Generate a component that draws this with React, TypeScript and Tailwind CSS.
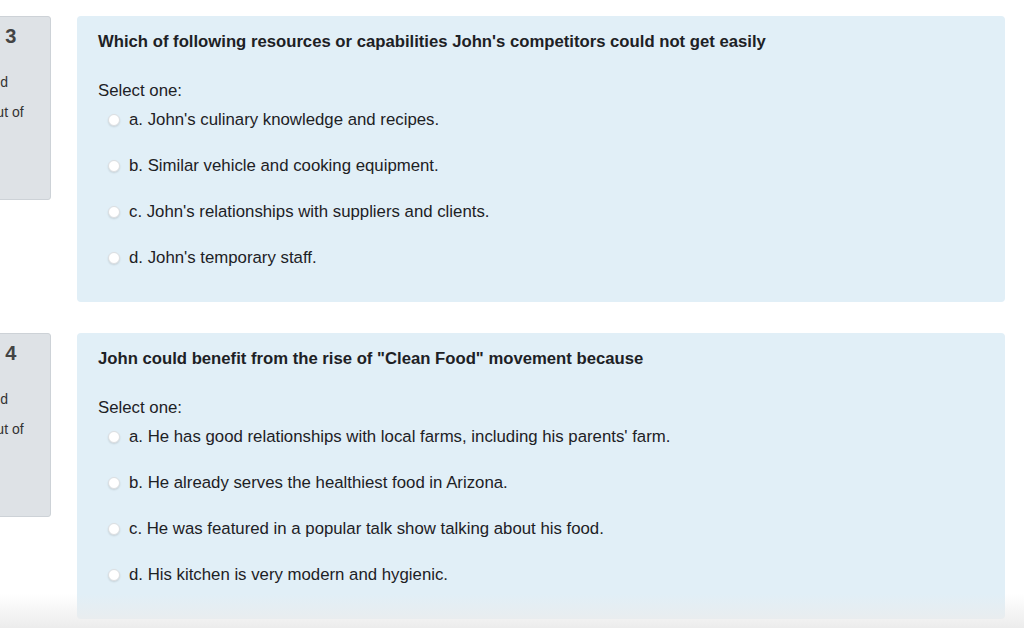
import React from "react";

interface Question {
  no: number;
  text: string;
  options: string[];
}

const questions: Question[] = [
  {
    no: 3,
    text: "Which of following resources or capabilities John's competitors could not get easily",
    options: [
      "a. John's culinary knowledge and recipes.",
      "b. Similar vehicle and cooking equipment.",
      "c. John's relationships with suppliers and clients.",
      "d. John's temporary staff.",
    ],
  },
  {
    no: 4,
    text: 'John could benefit from the rise of "Clean Food" movement because',
    options: [
      "a. He has good relationships with local farms, including his parents' farm.",
      "b. He already serves the healthiest food in Arizona.",
      "c. He was featured in a popular talk show talking about his food.",
      "d. His kitchen is very modern and hygienic.",
    ],
  },
];

function Radio() {
  return (
    <span className="mt-[5px] h-[12px] w-[12px] shrink-0 rounded-full border border-[#dcdfe2] bg-white shadow-[0_1px_2px_rgba(0,0,0,0.12)]" />
  );
}

function QuestionBlock({ q }: { q: Question }) {
  return (
    <div className="flex items-start">
      {/* info box, mostly scrolled off to the left */}
      <div className="ml-[-105px] mr-[26px] h-[184px] w-[156px] shrink-0 rounded-[3px] border border-[#cdd2d7] bg-[#dee2e6] pt-[8px] text-[#333]">
        <div className="whitespace-nowrap pl-[17px] text-[20px] font-bold leading-[22px] text-[#444]">
          Question {q.no}
        </div>
        <div className="ml-[3px] mt-[26px] whitespace-nowrap text-[14px] leading-[18px]">Not yet answered</div>
        <div className="ml-[42px] mt-[12px] whitespace-nowrap text-[14px] leading-[18px]">Marked out of</div>
        <div className="ml-[42px] whitespace-nowrap text-[14px] leading-[18px]">1.00</div>
      </div>
      <div className="w-[928px] shrink-0 rounded-[4px] bg-[#e1eff7] px-[21px] pb-[33px] pt-[15px] text-[#1d2125]">
        <div className="text-[16.7px] font-bold leading-[22px]">{q.text}</div>
        <div className="mt-[27px] text-[16.8px] leading-[22px]">Select one:</div>
        <div className="mt-[7px] ml-[10px] flex flex-col gap-[24px]">
          {q.options.map((opt, i) => (
            <label key={i} className="flex items-start gap-[9px] text-[16.8px] leading-[22px]">
              <Radio />
              <span>{opt}</span>
            </label>
          ))}
        </div>
      </div>
    </div>
  );
}

export default function App() {
  return (
    <div
      className="relative flex h-[628px] w-[1024px] flex-col overflow-hidden bg-white"
      style={{ fontFamily: '"Liberation Sans", Arial, sans-serif' }}
    >
      <div className="flex flex-col gap-[31px] pt-[16px]">
        {questions.map((q) => (
          <QuestionBlock key={q.no} q={q} />
        ))}
      </div>
      {/* fade at the bottom edge of the viewport */}
      <div className="pointer-events-none absolute bottom-0 left-0 h-[34px] w-full bg-gradient-to-b from-transparent to-[#ececec]" />
    </div>
  );
}
